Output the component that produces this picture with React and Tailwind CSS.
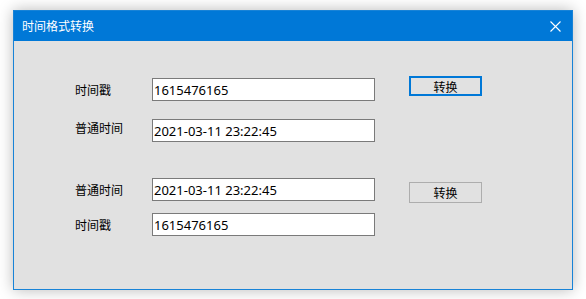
const cjk = "font-['Microsoft_YaHei','Noto_Sans_CJK_SC',sans-serif]";
const latin = "font-['Segoe_UI','Noto_Sans','Noto_Sans_CJK_SC',sans-serif]";

function Field({ label, value, labelClass = "" }) {
  return (
    <div className="flex items-center">
      <div className={`w-[77px] text-[12px] text-black ${cjk} ${labelClass}`}>{label}</div>
      <input
        readOnly
        value={value}
        className={`w-[223px] h-[23px] border border-[#7a7a7a] bg-white px-[1px] text-[13px] text-black outline-none ${latin}`}
      />
    </div>
  );
}

function ConvertButton({ active, className = "" }) {
  return (
    <button
      className={`ml-[34px] w-[73px] bg-[#e1e1e1] text-[12px] text-black ${cjk} ${
        active ? "h-[20px] border-2 border-[#0078d7]" : "h-[21px] border border-[#adadad]"
      } ${className}`}
    >
      转换
    </button>
  );
}

export default function App() {
  return (
    <div className="w-[586px] h-[299px] bg-white pt-[10px] pl-[13px]">
      <div className="w-[560px] h-[280px] border border-[#1883d7] bg-[#e1e1e1] shadow-[0_0_14px_rgba(0,0,0,0.28)] flex flex-col">
        {/* title bar */}
        <div className="h-[30px] bg-[#0078d7] flex items-center justify-between pl-[8px] pr-[10px]">
          <span className={`text-[12px] text-white ${cjk}`}>时间格式转换</span>
          <svg width="11" height="11" viewBox="0 0 11 11" className="mr-[1px]">
            <path d="M0.5 0.5 L10.5 10.5 M10.5 0.5 L0.5 10.5" stroke="white" strokeWidth="1.1" />
          </svg>
        </div>

        {/* body */}
        <div className="flex flex-col pl-[61px] pt-[37px]">
          <div className="flex items-start">
            <Field label="时间戳" value="1615476165" />
            <ConvertButton active className="-mt-[2px]" />
          </div>
          <div className="mt-[18px]">
            <Field label="普通时间" value="2021-03-11 23:22:45" labelClass="-mt-[6px]" />
          </div>
          <div className="mt-[36px] h-[23px] flex items-start">
            <Field label="普通时间" value="2021-03-11 23:22:45" />
            <ConvertButton className="mt-[4px]" />
          </div>
          <div className="mt-[12px]">
            <Field label="时间戳" value="1615476165" />
          </div>
        </div>
      </div>
    </div>
  );
}
